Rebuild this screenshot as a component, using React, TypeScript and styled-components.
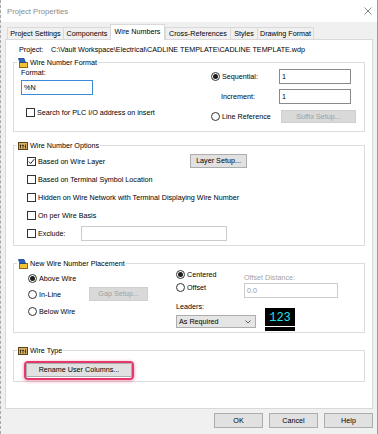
import React from "react";
import styled, { createGlobalStyle } from "styled-components";

const GlobalStyle = createGlobalStyle`
  html, body { margin: 0; padding: 0; background: #ffffff; }
  body { font-family: "Liberation Sans", Arial, sans-serif; font-size: 7.2px; color: #000; }
  *, *::before, *::after { box-sizing: border-box; }
`;

const Window = styled.div`
  width: 378px;
  height: 434px;
  background: #f0f0f0;
  border-left: 1px dashed #a8a8a8;
  border-right: 1px solid #9c9c9c;
  display: flex;
  flex-direction: column;
  overflow: hidden;
`;

const TitleBar = styled.div`
  height: 22px;
  background: #ffffff;
  display: flex;
  align-items: center;
  padding: 0 5px 0 6px;
`;

const Title = styled.span`
  font-size: 7.7px;
  color: #8a8a8a;
`;

const CloseBox = styled.span`
  margin-left: auto;
  display: flex;
  align-items: center;
`;

const TabStrip = styled.div`
  height: 17px;
  display: flex;
  align-items: flex-end;
  padding-left: 6px;
`;

const Tab = styled.div<{ $w: number; $active?: boolean; $last?: boolean }>`
  width: ${(p) => p.$w}px;
  height: ${(p) => (p.$active ? 16 : 12)}px;
  margin-bottom: ${(p) => (p.$active ? -1 : 0)}px;
  background: ${(p) => (p.$active ? "#ffffff" : "#f0f0f0")};
  border: 1px solid #d9d9d9;
  border-bottom: none;
  border-right: ${(p) => (p.$active || p.$last ? "1px solid #d9d9d9" : "none")};
  display: flex;
  align-items: center;
  justify-content: center;
  padding-bottom: ${(p) => (p.$active ? 2 : 0)}px;
  white-space: nowrap;
  position: relative;
  z-index: ${(p) => (p.$active ? 1 : 0)};
`;

const TabPage = styled.div`
  margin-left: 4px;
  width: 368px;
  height: 370px;
  background: #ffffff;
  border: 1px solid #d9d9d9;
  padding: 0 7px;
  display: flex;
  flex-direction: column;
`;

const ProjectRow = styled.div`
  margin-top: 4px;
  height: 10px;
  display: flex;
  align-items: center;
  padding-left: 6px;
  white-space: nowrap;
`;

const ProjectLabel = styled.span`
  width: 32px;
`;

const Group = styled.div<{ $mt: number }>`
  margin-top: ${(p) => p.$mt}px;
  border: 1px solid #dcdcdc;
  display: flex;
  flex-direction: column;
`;

const Legend = styled.div`
  display: flex;
  align-items: center;
  gap: 2px;
  height: 11px;
  margin: -6px 0 0 3px;
  padding: 0 1px;
  background: #ffffff;
  width: fit-content;
  white-space: nowrap;
`;

const FormatBody = styled.div`
  display: flex;
  padding: 0 0 8px 7px;
`;

const Col = styled.div<{ $w?: number; $pt?: number }>`
  display: flex;
  flex-direction: column;
  ${(p) => (p.$w ? `width: ${p.$w}px;` : "")}
  padding-top: ${(p) => p.$pt ?? 0}px;
`;

const TextLine = styled.div<{ $mt?: number; $disabled?: boolean; $pl?: number }>`
  height: 10px;
  line-height: 10px;
  margin-top: ${(p) => p.$mt ?? 0}px;
  padding-left: ${(p) => p.$pl ?? 0}px;
  color: ${(p) => (p.$disabled ? "#a3a3a3" : "#000")};
  white-space: nowrap;
`;

const Field = styled.div<{ $w: number; $h?: number; $mt?: number; $focus?: boolean; $disabled?: boolean }>`
  width: ${(p) => p.$w}px;
  height: ${(p) => p.$h ?? 15}px;
  margin-top: ${(p) => p.$mt ?? 0}px;
  border: 1px solid ${(p) => (p.$focus ? "#3c8ad8" : p.$disabled ? "#cccccc" : "#8a8a8a")};
  background: #ffffff;
  color: ${(p) => (p.$disabled ? "#9a9a9a" : "#000")};
  display: flex;
  align-items: center;
  padding-left: 2px;
  white-space: nowrap;
`;

const SeqGrid = styled.div`
  display: grid;
  grid-template-columns: 68px 72px;
  grid-template-rows: 15px 15px 14px;
  row-gap: 5px;
  padding-top: 1px;
  align-items: center;
`;

const Option = styled.label<{ $w?: number; $ml?: number; $mt?: number; $disabled?: boolean }>`
  display: flex;
  align-items: center;
  gap: 2px;
  height: 10px;
  ${(p) => (p.$w ? `width: ${p.$w}px; flex: none;` : "")}
  margin-left: ${(p) => p.$ml ?? 0}px;
  margin-top: ${(p) => p.$mt ?? 0}px;
  color: ${(p) => (p.$disabled ? "#a3a3a3" : "#000")};
  white-space: nowrap;
`;

const Box = styled.span`
  width: 9px;
  height: 9px;
  flex: none;
  border: 1px solid #333;
  background: #fff;
  display: flex;
  align-items: center;
  justify-content: center;
`;

const Circle = styled.span<{ $on?: boolean }>`
  width: 9px;
  height: 9px;
  flex: none;
  border: 1px solid #333;
  border-radius: 50%;
  background: #fff;
  display: flex;
  align-items: center;
  justify-content: center;
  &::after {
    content: "";
    width: 5px;
    height: 5px;
    border-radius: 50%;
    background: ${(p) => (p.$on ? "#1e1e1e" : "transparent")};
  }
`;

const Btn = styled.button<{ $w: number; $h?: number; $ml?: number; $disabled?: boolean }>`
  width: ${(p) => p.$w}px;
  height: ${(p) => p.$h ?? 14}px;
  margin: 0 0 0 ${(p) => p.$ml ?? 0}px;
  padding: 0;
  flex: none;
  font-family: inherit;
  font-size: 7.2px;
  line-height: 1;
  border: 1px solid ${(p) => (p.$disabled ? "#cfcfcf" : "#adadad")};
  background: ${(p) => (p.$disabled ? "#d9d9d9" : "#e1e1e1")};
  color: ${(p) => (p.$disabled ? "#a0a0a0" : "#000")};
  white-space: nowrap;
  align-self: ${(p) => (p.$h === 13 ? "end" : "center")};
`;

const OptionsBody = styled.div`
  display: grid;
  grid-auto-rows: 18px;
  padding: 1px 0 3px 13px;
`;

const Row = styled.div`
  display: flex;
  align-items: center;
`;

const PlacementBody = styled.div`
  display: flex;
  padding: 0 0 1px 14px;
`;

const PlaceRows = styled.div`
  width: 148px;
  padding-top: 1px;
  display: grid;
  grid-template-rows: 16px 16px 18px;
  align-self: flex-start;
`;

const Flex = styled.div<{ $align?: string }>`
  display: flex;
  align-items: ${(p) => p.$align ?? "flex-start"};
`;

const Select = styled.div`
  width: 80px;
  height: 13px;
  margin-top: 3px;
  border: 1px solid #adadad;
  background: #e5e5e5;
  display: flex;
  align-items: center;
  justify-content: space-between;
  padding: 0 4px 0 2px;
  white-space: nowrap;
`;

const Preview = styled.div`
  margin: 10px 0 0 9px;
  width: 30px;
  display: flex;
  flex-direction: column;
  gap: 1px;
`;

const PreviewBox = styled.div`
  height: 18px;
  background: #000;
  color: #1ee3e6;
  font-family: "Liberation Mono", "DejaVu Sans Mono", monospace;
  font-size: 12px;
  display: flex;
  align-items: center;
  justify-content: center;
  padding-top: 1px;
`;

const PreviewBar = styled.div`
  height: 4px;
  background: #000;
`;

const TypeBody = styled.div`
  padding: 5px 0 1px 10px;
`;

const Highlight = styled.div`
  width: fit-content;
  border: 2px solid #e5386c;
  border-radius: 4px;
  padding-bottom: 1px;
  box-shadow: 0 1px 3px 1px rgba(229, 56, 108, 0.35);
  display: flex;
`;

const Footer = styled.div`
  margin-top: 4px;
  display: flex;
  justify-content: flex-end;
  gap: 6px;
  padding-right: 4px;
`;

const FormatIcon = () => (
  <svg width="10" height="10" viewBox="0 0 10 10">
    <rect x="1.5" y="4.5" width="8" height="5" fill="#f2c232" stroke="#8a6a10" strokeWidth="1" />
    <path d="M0.5 0.5 L6 0.5 L7.5 4.5 L2 4.5 Z" fill="#2a64c8" stroke="#1b3f80" strokeWidth="0.8" />
  </svg>
);

const TableIcon = () => (
  <svg width="10" height="10" viewBox="0 0 10 10">
    <rect x="0.5" y="1.5" width="9" height="7" fill="#dcb468" stroke="#5b4216" strokeWidth="1" />
    <path d="M2.5 3.5 V7.5 M1.8 4.5 H3.4 M5 3.5 V7.5 M4.3 4.5 H5.9 M7.6 3.3 V7.5 M6.7 5.6 H7.6" stroke="#2c1e08" strokeWidth="0.8" fill="none" />
  </svg>
);

const Check = ({ on }: { on?: boolean }) => (
  <Box>
    {on && (
      <svg width="7" height="7" viewBox="0 0 7 7">
        <path d="M0.8 3.6 L2.7 5.5 L6.2 1.2" stroke="#222" strokeWidth="1" fill="none" />
      </svg>
    )}
  </Box>
);

const tabs = [
  { label: "Project Settings", w: 56 },
  { label: "Components", w: 47 },
  { label: "Wire Numbers", w: 55, active: true },
  { label: "Cross-References", w: 65 },
  { label: "Styles", w: 27 },
  { label: "Drawing Format", w: 57 },
];

export default function App() {
  return (
    <>
      <GlobalStyle />
      <Window>
        <TitleBar>
          <Title>Project Properties</Title>
          <CloseBox>
            <svg width="8" height="8" viewBox="0 0 8 8">
              <path d="M0.5 0.5 L7.5 7.5 M7.5 0.5 L0.5 7.5" stroke="#7a7a7a" strokeWidth="0.9" />
            </svg>
          </CloseBox>
        </TitleBar>
        <TabStrip>
          {tabs.map((t, i) => (
            <Tab key={t.label} $w={t.w} $active={t.active} $last={i === tabs.length - 1}>
              {t.label}
            </Tab>
          ))}
        </TabStrip>
        <TabPage>
          <ProjectRow>
            <ProjectLabel>Project:</ProjectLabel>
            <span>C:\Vault Workspace\Electrical\CADLINE TEMPLATE\CADLINE TEMPLATE.wdp</span>
          </ProjectRow>

          <Group $mt={8}>
            <Legend>
              <FormatIcon />
              <span>Wire Number Format</span>
            </Legend>
            <FormatBody>
              <Col $w={190}>
                <TextLine>Format:</TextLine>
                <Field $w={72} $mt={2} $focus>%N</Field>
                <Option $ml={5} $mt={12}>
                  <Check />
                  Search for PLC I/O address on insert
                </Option>
              </Col>
              <SeqGrid>
                <Option>
                  <Circle $on />
                  Sequential:
                </Option>
                <Field $w={72}>1</Field>
                <TextLine $pl={10}>Increment:</TextLine>
                <Field $w={72}>1</Field>
                <Option>
                  <Circle />
                  Line Reference
                </Option>
                <Btn $w={75} $h={13} $ml={2} $disabled>
                  Suffix Setup...
                </Btn>
              </SeqGrid>
            </FormatBody>
          </Group>

          <Group $mt={13}>
            <Legend>
              <TableIcon />
              <span>Wire Number Options</span>
            </Legend>
            <OptionsBody>
              <Row>
                <Option $w={163}>
                  <Check on />
                  Based on Wire Layer
                </Option>
                <Btn $w={57}>Layer Setup...</Btn>
              </Row>
              <Row>
                <Option>
                  <Check />
                  Based on Terminal Symbol Location
                </Option>
              </Row>
              <Row>
                <Option>
                  <Check />
                  Hidden on Wire Network with Terminal Displaying Wire Number
                </Option>
              </Row>
              <Row>
                <Option>
                  <Check />
                  On per Wire Basis
                </Option>
              </Row>
              <Row>
                <Option $w={54}>
                  <Check />
                  Exclude:
                </Option>
                <Field $w={146} $disabled />
              </Row>
            </OptionsBody>
          </Group>

          <Group $mt={17}>
            <Legend>
              <FormatIcon />
              <span>New Wire Number Placement</span>
            </Legend>
            <PlacementBody>
              <PlaceRows>
                <Row>
                  <Option>
                    <Circle $on />
                    Above Wire
                  </Option>
                </Row>
                <Row>
                  <Option $w={61}>
                    <Circle />
                    In-Line
                  </Option>
                  <Btn $w={59} $disabled>
                    Gap Setup...
                  </Btn>
                </Row>
                <Row>
                  <Option>
                    <Circle />
                    Below Wire
                  </Option>
                </Row>
              </PlaceRows>
              <Col>
                <Flex>
                  <Col $w={68}>
                    <Option>
                      <Circle $on />
                      Centered
                    </Option>
                    <Option $mt={3}>
                      <Circle />
                      Offset
                    </Option>
                  </Col>
                  <Col $pt={4}>
                    <TextLine $disabled>Offset Distance:</TextLine>
                    <Field $w={94} $disabled>
                      0.0
                    </Field>
                  </Col>
                </Flex>
                <Flex>
                  <Col $w={80}>
                    <TextLine $mt={4}>Leaders:</TextLine>
                    <Select>
                      <span>As Required</span>
                      <svg width="6" height="4" viewBox="0 0 6 4">
                        <path d="M0.5 0.5 L3 3 L5.5 0.5" stroke="#444" strokeWidth="0.8" fill="none" />
                      </svg>
                    </Select>
                  </Col>
                  <Preview>
                    <PreviewBox>123</PreviewBox>
                    <PreviewBar />
                  </Preview>
                </Flex>
              </Col>
            </PlacementBody>
          </Group>

          <Group $mt={17}>
            <Legend>
              <TableIcon />
              <span>Wire Type</span>
            </Legend>
            <TypeBody>
              <Highlight>
                <Btn $w={106}>Rename User Columns...</Btn>
              </Highlight>
            </TypeBody>
          </Group>
        </TabPage>
        <Footer>
          <Btn $w={49} $h={15}>OK</Btn>
          <Btn $w={49} $h={15}>Cancel</Btn>
          <Btn $w={49} $h={15}>Help</Btn>
        </Footer>
      </Window>
    </>
  );
}
